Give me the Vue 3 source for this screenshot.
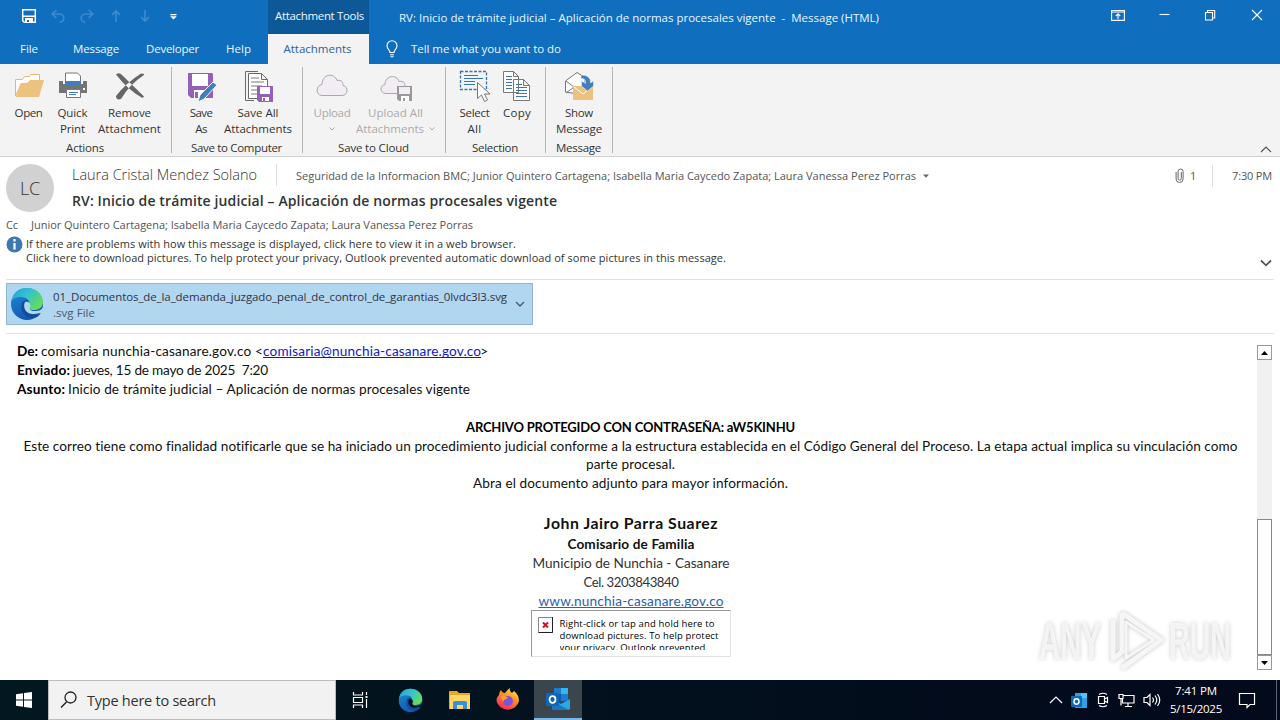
<script setup>
// Tracks a run of text out or in so that it spans the given width in pixels.
const vFit = {
  mounted(el, { value }) {
    const count = [...el.textContent].length
    const natural = el.getBoundingClientRect().width
    if (count > 1) el.style.letterSpacing = `${((value - natural) / (count - 0.5)).toFixed(3)}px`
  },
}
</script>

<template>
  <div class="screen">
    <header class="titlebar">
      <div class="top-row">
        <div class="quick">
          <svg width="16" height="16" viewBox="0 0 16 16"><path d="M1.700 1.700h12.600v12.600H3.200l-1.500-1.500zM2 8.200h12" fill="none" stroke="#fff" stroke-width="1.500" /><path d="M4 10h8v5H4z" fill="#fff" /><path d="M6 12h2v2H6z" fill="#106ebe" /></svg>
          <svg class="dim" width="16" height="16" viewBox="0 0 16 16"><path d="M6.500 2 2 6l4.500 4M2.500 6h7.200a4 4 0 0 1 0 8.200" /></svg>
          <svg class="dim" width="16" height="16" viewBox="0 0 16 16"><path d="M9.500 2 14 6l-4.500 4M13.500 6H6.300a4 4 0 0 0 0 8.200" /></svg>
          <svg class="dim" width="16" height="16" viewBox="0 0 16 16"><path d="M8 14V3M4 7l4-4 4 4" /></svg>
          <svg class="dim" width="16" height="16" viewBox="0 0 16 16"><path d="M8 2v11M4 9l4 4 4-4" /></svg>
          <svg width="16" height="16" viewBox="0 0 16 16"><path d="M4.500 6h6v1.200h-6zM4.200 8.300h6.600L7.500 11.500z" fill="#fff" /></svg>
        </div>
        <div class="tools"><span v-fit="89">Attachment Tools</span></div>
        <div class="window-title"><span v-fit="480">RV: Inicio de trámite judicial – Aplicación de normas procesales vigente&nbsp; -&nbsp; Message (HTML)</span></div>
        <div class="controls">
          <svg width="14" height="12" viewBox="0 0 14 12"><path d="M.6 1.500h12.800v9.900H.6zM.6 3h12.800M7 10V5M4.800 7 7 4.800 9.200 7" /></svg>
          <svg width="12" height="12" viewBox="0 0 12 12"><path d="M1.500 5.500h10" /></svg>
          <svg width="12" height="12" viewBox="0 0 12 12"><path d="M1.500 3.500h7v7.500h-7zM3.500 3.500v-2h7.200v7.500H8.500" /></svg>
          <svg width="12" height="12" viewBox="0 0 12 12"><path d="m1 1 10 10M11 1 1 11" /></svg>
        </div>
      </div>
      <nav class="tabs">
        <span class="tab file"><span v-fit="18">File</span></span>
        <span class="tab msg"><span v-fit="46">Message</span></span>
        <span class="tab dev"><span v-fit="53">Developer</span></span>
        <span class="tab help"><span v-fit="25">Help</span></span>
        <span class="tab active"><span v-fit="68">Attachments</span></span>
        <svg class="bulb" width="12" height="18" viewBox="0 0 12 18"><path d="M4 12.500C4 10 1 9 1 5.700a5 5 0 0 1 10 0C11 9 8 10 8 12.500zM4 14.700h4M4.500 16.700h3" fill="none" stroke="#fff" stroke-width="1.100" /></svg>
        <span v-fit="150">Tell me what you want to do</span>
      </nav>
    </header>

    <section class="ribbon">
      <div class="group actions">
        <div class="buttons">
          <div class="btn">
            <svg width="32" height="32" viewBox="0 0 32 32"><path d="M2.500 26V9.500h7l2-3h5l1-2h9V14H8z" fill="#fff" stroke="#e8b96d" /><path d="M3 27 8 13h6l3-3h14l-5 17z" fill="#ecc27e" /></svg>
            <span v-fit="28">Open</span>
          </div>
          <div class="btn">
            <svg width="32" height="32" viewBox="0 0 32 32"><path d="M8.500 3h12l3 3v8h-15z" fill="#fff" stroke="#777" /><path d="M2 11h4v3h20v-3h4v12H2z" fill="#747474" /><path d="M8 11h16v4H8z" fill="#3f7fbd" /><path d="M9.500 19.500h14v8h-14z" fill="#fff" stroke="#777" /><path d="M12 22.500h9M12 24.500h7" stroke="#3f7fbd" /><path d="M26 18h2v2h-2z" fill="#fff" /></svg>
            <span v-fit="30">Quick</span><span v-fit="25">Print</span>
          </div>
          <div class="btn">
            <svg width="32" height="32" viewBox="0 0 32 32"><path d="M2 4.500Q5 2 8 5L30 26.500l-1.500 1.500Q14 20 2 4.500zM30 4 27 3.500Q12 13 2 26q0 4.500 5 3Q16 14 30 5z" fill="#666" /></svg>
            <span v-fit="43">Remove</span><span v-fit="63">Attachment</span>
          </div>
        </div>
        <div class="caption"><span v-fit="38">Actions</span></div>
      </div>
      <div class="group computer">
        <div class="buttons">
          <div class="btn">
            <svg width="32" height="32" viewBox="0 0 32 32"><path d="M3 3h24l1 1v24H6l-3-3z" fill="#9561b7" /><path d="M7 4h16v12H7zM9 20h11v8H9z" fill="#fff" /><path d="M10 22h3v6h-3z" fill="#9561b7" /><path d="m28 12 4 3-13 14-6 3 2-7z" fill="#3f7fbd" stroke="#f3f3f3" /></svg>
            <span v-fit="23">Save</span><span v-fit="12">As</span>
          </div>
          <div class="btn">
            <svg width="32" height="32" viewBox="0 0 32 32"><path d="M16 1.500H3.500v29H12" fill="none" stroke="#6a6a6a" /><path d="M6.500 3.500h13l6 6v19h-19zM19.500 3.500v6h6" fill="#fff" stroke="#6a6a6a" /><path d="M9 8h8M9 12h13M9 16h11M9 20h7M9 24h7" stroke="#777" /><path d="M15 16h16v16H17l-2-2z" fill="#9561b7" /><path d="M18 17h10v7H18zM20 27h7v4h-7z" fill="#fff" /><path d="M21 28h2v3h-2z" fill="#9561b7" /></svg>
            <span v-fit="41">Save All</span><span v-fit="68">Attachments</span>
          </div>
        </div>
        <div class="caption"><span v-fit="91">Save to Computer</span></div>
      </div>
      <div class="group cloud">
        <div class="buttons">
          <div class="btn off">
            <svg width="32" height="32" viewBox="0 0 32 32"><path d="M6 25.500C-1 25 0 15 6 14.500 6 4 18 2 21 10.500c5-1 6 2 6 5 6 1 5 10-1 10z" fill="#f2edf4" stroke="#aaa6ab" /></svg>
            <span v-fit="37">Upload</span>
            <svg class="menu-caret" width="6" height="4" viewBox="0 0 6 4"><path d="m.5.5 2.500 2.500L5.500.5" fill="none" stroke="#aaa" /></svg>
          </div>
          <div class="btn off">
            <svg width="32" height="32" viewBox="0 0 32 32"><path d="M6 23.500C-1 23 0 15 5 14.500 5 5 17 4 19 11.500c5-1 6 2 6 5l2 7z" fill="#f2edf4" stroke="#aaa6ab" /><path d="M17 16h15v15H19l-2-2z" fill="#999" /><path d="M19 17h11v7H19z" fill="#f2edf4" /><path d="M21 26h8v5h-8z" fill="#fff" /><path d="M23 28h2v3h-2z" fill="#999" /></svg>
            <span v-fit="55">Upload All</span>
            <span class="with-caret"><span v-fit="68">Attachments</span><svg width="6" height="4" viewBox="0 0 6 4"><path d="m.5.5 2.500 2.500L5.500.5" fill="none" stroke="#aaa" /></svg></span>
          </div>
        </div>
        <div class="caption"><span v-fit="71">Save to Cloud</span></div>
      </div>
      <div class="group selection">
        <div class="buttons">
          <div class="btn">
            <svg width="32" height="32" viewBox="0 0 32 32"><path d="M1.500 1.500h26v18h-26z" fill="none" stroke="#3676b5" stroke-width="1.300" stroke-dasharray="3 1.500" /><path d="M5 5.500h14M5 8.500h19M5 11.500h11M5 14.500h11" stroke="#3676b5" /><path d="M18.500 12.500v16l4-3.500 3 6.500 3-1.500-3-6h5.500z" fill="#fff" stroke="#777" /></svg>
            <span v-fit="30">Select</span><span v-fit="14">All</span>
          </div>
          <div class="btn">
            <svg width="32" height="32" viewBox="0 0 32 32"><path d="M2.500 1.500h10l5 5v16h-15zM12.500 1.500v5h5M12.500 9.500h10l6 6v15h-16zM22.500 9.500v6h6" fill="#fff" stroke="#777" /><path d="M5 6.500h6M5 9.500h6M5 12.500h6M5 15.500h6M5 18.500h6M15 14.500h6M15 17.500h11M15 20.500h11M15 23.500h11M15 26.500h11" stroke="#3676b5" /></svg>
            <span v-fit="28">Copy</span>
          </div>
        </div>
        <div class="caption"><span v-fit="46">Selection</span></div>
      </div>
      <div class="group message">
        <div class="buttons">
          <div class="btn">
            <svg width="32" height="32" viewBox="0 0 32 32"><path d="M2.500 11 14 2.500l8 5V25l-19.500-3z" fill="#fff" stroke="#777" /><path d="m3 11 8 6-8 6" fill="none" stroke="#777" /><path d="M10 16h20v14H10z" fill="#ecc27e" /><path d="m11 17 9 7 9-7" fill="none" stroke="#fff" /><path d="M18 5q10 0 9.500 8l3-2v5l-6 5-6-5v-5l4 2.500q1-5-4.500-5z" fill="#3f7fbd" stroke="#f3f3f3" stroke-width=".5" /></svg>
            <span v-fit="28">Show</span><span v-fit="46">Message</span>
          </div>
        </div>
        <div class="caption"><span v-fit="45">Message</span></div>
      </div>
      <svg class="collapse" width="12" height="7" viewBox="0 0 12 7"><path d="m1 6 5-5 5 5" fill="none" stroke="#555" stroke-width="1.100" /></svg>
    </section>

    <section class="envelope">
      <div class="sender-row">
        <div class="avatar"><span v-fit="20">LC</span></div>
        <div class="who">
          <div class="from">
            <span class="name"><span v-fit="185">Laura Cristal Mendez Solano</span></span>
            <span class="recipients"><span v-fit="620">Seguridad de la Informacion BMC; Junior Quintero Cartagena; Isabella Maria Caycedo Zapata; Laura Vanessa Perez Porras</span></span>
            <svg class="more" width="6" height="4" viewBox="0 0 6 4"><path d="M0 .5h6L3 3.700z" fill="#666" /></svg>
            <span class="stamp">
              <svg width="9" height="15" viewBox="0 0 9 15"><path d="M6.300 4v6.500a1.600 1.600 0 0 1-3.200 0V3.500a2.500 2.500 0 0 1 5 0v7.500a3.500 3.500 0 0 1-7 0V4" fill="none" stroke="#666" /></svg>
              <span class="count">1</span>
              <span class="time"><span v-fit="40">7:30 PM</span></span>
            </span>
          </div>
          <div class="subject"><span v-fit="485">RV: Inicio de trámite judicial – Aplicación de normas procesales vigente</span></div>
        </div>
      </div>
      <div class="cc"><span class="cc-label"><span v-fit="12">Cc</span></span><span v-fit="442">Junior Quintero Cartagena; Isabella Maria Caycedo Zapata; Laura Vanessa Perez Porras</span></div>
      <div class="notice">
        <svg class="info" width="17" height="17" viewBox="0 0 17 17"><circle cx="8.500" cy="8.500" r="8" fill="#3e78b3" /><path d="M8.500 3v2.500M8.500 7v6.500" stroke="#fff" stroke-width="2.200" /></svg>
        <div class="notice-text">
          <div><span v-fit="490">If there are problems with how this message is displayed, click here to view it in a web browser.</span></div>
          <div><span v-fit="700">Click here to download pictures. To help protect your privacy, Outlook prevented automatic download of some pictures in this message.</span></div>
        </div>
        <svg class="expand" width="12" height="8" viewBox="0 0 12 8"><path d="m1 1.500 5 4.800 5-4.800" fill="none" stroke="#555" stroke-width="1.800" /></svg>
      </div>
    </section>

    <section class="attachments">
      <div class="file-card">
        <svg width="34" height="34" viewBox="0 0 34 34">
          <defs>
            <linearGradient id="edge-green" x1="0" y1="0" x2="1" y2=".6"><stop offset="0" stop-color="#249fd8" /><stop offset=".5" stop-color="#35c1cd" /><stop offset="1" stop-color="#66dc5c" /></linearGradient>
            <linearGradient id="edge-blue" x1="0" y1="0" x2=".5" y2="1"><stop offset="0" stop-color="#1b8fd8" /><stop offset="1" stop-color="#1555b0" /></linearGradient>
          </defs>
          <g id="edge-mark">
            <circle cx="17" cy="17" r="16" fill="url(#edge-blue)" />
            <path d="M1.500 14C3 5 9 1 17 1c9 0 16 6 16 14 0 6-5 8-9 8-5 0-6-2-5-4 2-5-2-9-8-9-5 0-8 2-9.500 4z" fill="url(#edge-green)" />
            <path d="M12 16c-3 8 3 15 11 15 3 0 6-2 8-5-8 4-15 0-14-7 0-3 1-4 1-6-3 0-5 1-6 3z" fill="#124c9a" />
          </g>
          <path d="M15 15c-3 6 2 13 9 12 3 0 5-1 6-1l4 1v-8c-2 4-5 5-9 5-5 0-6-2-5-4 1-3-1-6-5-5z" fill="#b1d6f0" />
        </svg>
        <div class="file-text"><span v-fit="454">01_Documentos_de_la_demanda_juzgado_penal_de_control_de_garantias_0lvdc3l3.svg</span><span class="kind" v-fit="42">.svg File</span></div>
        <svg width="10" height="7" viewBox="0 0 10 7"><path d="m1 1 4 4 4-4" fill="none" stroke="#456" stroke-width="1.300" /></svg>
      </div>
    </section>

    <main class="reading">
      <article class="mail">
        <p><b v-fit="21">De:</b><span class="g" v-fit="222">comisaria nunchia-casanare.gov.co &lt;</span><a class="mailto" v-fit="218">comisaria@nunchia-casanare.gov.co</a><span class="close">&gt;</span></p>
        <p><b v-fit="53">Enviado:</b><span class="g" v-fit="195">jueves, 15 de mayo de 2025&nbsp; 7:20</span></p>
        <p><b v-fit="48">Asunto:</b><span class="g" v-fit="402">Inicio de trámite judicial – Aplicación de normas procesales vigente</span></p>
        <div class="centered">
          <p class="secret"><b v-fit="329">ARCHIVO PROTEGIDO CON CONTRASEÑA: aW5KINHU</b></p>
          <p><span v-fit="1214">Este correo tiene como finalidad notificarle que se ha iniciado un procedimiento judicial conforme a la estructura establecida en el Código General del Proceso. La etapa actual implica su vinculación como</span></p>
          <p class="tight"><span v-fit="89">parte procesal.</span></p>
          <p><span v-fit="315">Abra el documento adjunto para mayor información.</span></p>
        </div>
        <div class="signature">
          <p class="person"><b v-fit="174">John Jairo Parra Suarez</b></p>
          <p><b v-fit="127">Comisario de Familia</b></p>
          <p><span v-fit="197">Municipio de Nunchia - Casanare</span></p>
          <p class="phone"><span v-fit="95">Cel. 3203843840</span></p>
          <p><a class="site" v-fit="185">www.nunchia-casanare.gov.co</a></p>
          <div class="blocked">
            <svg width="15" height="16" viewBox="0 0 15 16"><path d="M.5.5h14v15H.5z" fill="#fff" stroke="#888" /><path d="M.5 15.500h14V0" fill="none" stroke="#222" /><path d="m5 5.500 5 5M10 5.500l-5 5" stroke="#cf1126" stroke-width="2" /></svg>
            <div class="blocked-text"><span v-fit="155">Right-click or tap and hold here to</span><br><span v-fit="159">download pictures. To help protect</span><br><span v-fit="146">your privacy, Outlook prevented</span></div>
          </div>
        </div>
      </article>
      <div class="scrollbar">
        <div class="arrow"><svg width="7" height="4" viewBox="0 0 7 4"><path d="M0 4 3.500 0 7 4z" /></svg></div>
        <div class="track"><div class="thumb"></div></div>
        <div class="arrow"><svg width="7" height="4" viewBox="0 0 7 4"><path d="M0 0h7L3.500 4z" /></svg></div>
      </div>
      <svg class="watermark" width="208" height="70" viewBox="0 0 208 70">
        <g class="wm-text">
          <text x="8" y="54" textLength="62" lengthAdjust="spacingAndGlyphs">ANY</text>
          <text x="138" y="54" textLength="62" lengthAdjust="spacingAndGlyphs">RUN</text>
        </g>
        <g class="wm-logo">
          <path d="M91 8v39l-9 7V15M91 8l39 27-39 28" stroke-width="5" />
          <path d="M95 17v36l28-18z" stroke-width="3" />
        </g>
      </svg>
    </main>

    <footer class="taskbar">
      <div class="start"><svg width="16" height="16" viewBox="0 0 16 16"><path d="M0 2.300 7 1.300v6.300H0zM8 1.100 16 0v7.600H8zM0 8.500h7v6.300l-7-1zM8 8.500h8V16l-8-1.100z" fill="#fff" /></svg></div>
      <div class="search">
        <svg width="17" height="18" viewBox="0 0 17 18"><path d="m1 16.500 5.500-5.500" stroke="#222" stroke-width="1.400" /><circle cx="10.500" cy="6.500" r="5.500" fill="none" stroke="#222" stroke-width="1.300" /></svg>
        <span v-fit="129">Type here to search</span>
      </div>
      <div class="task"><svg width="18" height="18" viewBox="0 0 18 18"><path d="M2.500 1v3h9V1M2.500 17v-3h9v3M2.500 6.500h9v5h-9zM15.500 1v3M15.500 8v9" fill="none" stroke="#fff" stroke-width="1.200" /><path d="M14.500 5h2v2h-2z" fill="#fff" /></svg></div>
      <div class="task"><svg width="25" height="25" viewBox="0 0 34 34"><use href="#edge-mark" /><path d="M15 15c-3 6 2 13 9 12 3 0 5-1 6-1l4 1v-8c-2 4-5 5-9 5-5 0-6-2-5-4 1-3-1-6-5-5z" fill="#03141c" /></svg></div>
      <div class="task"><svg width="22" height="20" viewBox="0 0 22 20"><path d="M0 2q0-1 1-1h7l2 2h11v16H0z" fill="#e9a927" /><path d="M1 5h20v14H1z" fill="#ffd766" /><path d="M4 19v-6q0-2 2-2h10q2 0 2 2v6h-4v-4H8v4z" fill="#3a91d1" /></svg></div>
      <div class="task">
        <svg width="24" height="24" viewBox="0 0 24 24">
          <defs><linearGradient id="fire" x1=".8" y1="0" x2=".25" y2="1"><stop offset="0" stop-color="#fff04a" /><stop offset=".45" stop-color="#ff8a22" /><stop offset="1" stop-color="#ed2467" /></linearGradient></defs>
          <path d="M3 7q0-3 2-5 1 3 4 3 2-3 5-5-1 3 2 5l2-2q5 4 5 10A11.500 11 0 0 1 .5 13Q.5 9 3 7z" fill="url(#fire)" /><circle cx="12" cy="13" r="5" fill="#8052d8" /><path d="M5 8q5-1 7 2l-3 1.500q-2 .5-1 2-3-1-3-5.500z" fill="#ff9a26" />
        </svg>
      </div>
      <div class="task current">
        <svg width="25" height="24" viewBox="0 0 25 24"><g id="outlook-mark"><path d="M8 1h14v13H8z" fill="#1b7bd0" /><path d="M15 1h7v6h-7z" fill="#35b5ef" /><path d="M8 7h7v7H8z" fill="#0c5dac" /><path d="M6 12l9 5 9-5v9q0 2-2 2H6z" fill="#2ca7e5" /><path d="m6 14 17 9H6z" fill="#1877c4" /><rect y="6" width="13" height="13" rx="1" fill="#0f67b8" /><ellipse cx="6.500" cy="12.500" rx="3" ry="3.300" fill="none" stroke="#fff" stroke-width="1.700" /></g></svg>
      </div>
      <div class="tray">
        <svg class="line" width="14" height="8" viewBox="0 0 14 8"><path d="m1 7 6-6 6 6" /></svg>
        <svg width="17" height="17" viewBox="0 0 17 17"><path d="M4 1h12v15H4z" fill="#2aa3e6" /><path d="M10 1h6v5h-6z" fill="#55c5f5" /><rect y="4" width="11" height="11" rx="1" fill="#0f67b8" /><ellipse cx="5.500" cy="9.500" rx="2.500" ry="2.700" fill="none" stroke="#fff" stroke-width="1.500" /></svg>
        <svg class="line" width="14" height="16" viewBox="0 0 14 16"><path d="M2.500 4.500h6v7h-6zM8.500 7l3-1.500v5l-3-1.500M3 2.500Q7 0 11 2.500M3 13.500q4 2.500 8 0" /></svg>
        <svg class="line" width="17" height="15" viewBox="0 0 17 15"><path d="M5.500 2.500h10.500v7.500H4.500V6M10 10v3M7 13.500h7M1 1.500h4v4H1zM3 5.500v7" /></svg>
        <svg class="line" width="18" height="14" viewBox="0 0 18 14"><path d="M1 4.500h3l3-3v11l-3-3H1zM9.500 4.500q2 2.500 0 5M12 2.500q3.500 4.500 0 9M14.500 1q4.500 6 0 12" /></svg>
      </div>
      <div class="clock"><span v-fit="42">7:41 PM</span><span v-fit="52">5/15/2025</span></div>
      <svg class="action" width="18" height="17" viewBox="0 0 18 17"><path d="M1.500 1.500h15v11H12l-3 3v-3H1.500z" fill="none" stroke="#fff" stroke-width="1.200" /></svg>
      <div class="peek"></div>
    </footer>
  </div>
</template>

<style>
body { margin: 0; overflow: hidden; background: #fff; }
</style>

<style scoped>
.screen { width: 1280px; height: 720px; display: flex; flex-direction: column; background: #fff; font-family: "Open Sans", "Noto Sans", sans-serif; font-size: 11.5px; line-height: 16px; color: #444; overflow: hidden; }
.screen svg { flex: none; display: block; }
span, b, a { white-space: nowrap; }

.titlebar { height: 64px; flex: none; background: #106ebe; color: #eaf6ff; }
.top-row { display: flex; height: 34px; }
.quick { width: 247px; padding: 0 0 2px 21px; display: flex; align-items: center; gap: 13px; }
.dim path { fill: none; stroke: #3f8bcf; stroke-width: 1.600; }
.tools { width: 101px; background: #0d5997; display: flex; align-items: center; justify-content: center; padding: 0 0 2px 2px; box-sizing: border-box; }
.window-title { flex: 1; padding: 10px 0 0 30px; }
.controls { display: grid; grid-template-columns: 46px 46px 46px 47px; justify-items: center; padding-top: 9px; height: 12px; width: 185px; }
.controls path { fill: none; stroke: #fff; stroke-width: 1.100; }
.tabs { display: flex; height: 30px; align-items: center; }
.tab { display: flex; justify-content: center; }
.file { width: 58px; }
.msg { width: 76px; }
.dev { width: 77px; }
.help { width: 55px; padding-right: 2px; }
.active { width: 99px; padding-right: 2px; height: 30px; align-items: center; background: #f3f3f3; color: #2b6499; }
.bulb { margin: 0 13px 0 17px; }

.ribbon { height: 93px; box-sizing: border-box; flex: none; background: #f3f3f3; border-bottom: 1px solid #d2d2d2; display: flex; position: relative; color: #333; }
.group { display: flex; flex-direction: column; box-sizing: border-box; height: 86px; margin-top: 3px; border-right: 1px solid #b5b5b5; padding-top: 3px; }
.buttons { height: 70px; flex: none; display: flex; }
.btn { display: flex; flex-direction: column; align-items: center; }
.btn > svg:first-child { margin-bottom: 3px; }
.caption { text-align: center; padding-right: 1px; }
.actions { width: 172px; }
.actions .buttons { padding-left: 6px; }
.actions .btn:nth-child(1) { width: 45px; }
.actions .btn:nth-child(2) { width: 43px; }
.actions .btn:nth-child(3) { width: 71px; }
.computer { width: 131px; }
.computer .buttons { padding-left: 10px; }
.computer .btn:nth-child(1) { width: 38px; }
.computer .btn:nth-child(2) { width: 76px; }
.cloud { width: 143px; }
.cloud .buttons { padding-left: 7px; }
.cloud .btn:nth-child(1) { width: 44px; }
.cloud .btn:nth-child(2) { width: 83px; }
.off { color: #aaa; }
.menu-caret { margin-top: 6px; }
.with-caret { display: flex; align-items: center; gap: 5px; }
.selection { width: 100px; }
.selection .buttons { padding-left: 9px; }
.selection .btn:nth-child(1) { width: 39px; }
.selection .btn:nth-child(2) { width: 46px; }
.message { width: 67px; }
.message .buttons { justify-content: center; }
.collapse { position: absolute; right: 8px; bottom: 3px; }

.envelope { height: 123px; flex: none; box-sizing: border-box; padding-top: 7px; margin: 0 6px; border-bottom: 1px solid #e1e1e1; font-size: 11px; color: #555; }
.sender-row { display: flex; height: 50px; }
.avatar { width: 48px; height: 48px; border-radius: 50%; background: #d1d1d1; display: flex; align-items: center; justify-content: center; font-size: 18px; font-weight: 300; color: #333; flex: none; }
.who { flex: 1; margin-left: 18px; }
.from { display: flex; align-items: center; height: 22px; }
.name { font-size: 14.5px; font-weight: 300; color: #333; width: 204px; border-right: 1px solid #ddd; line-height: 22px; margin-right: 19px; }
.recipients { margin-right: 7px; padding-top: 1px; }
.more { margin-top: 2px; }
.stamp { margin-left: auto; display: flex; align-items: center; padding-top: 1px; }
.count { margin-left: 6px; width: 22px; }
.time { border-left: 1px solid #ddd; padding-left: 19px; padding-right: 2px; line-height: 22px; }
.subject { font-size: 14px; font-weight: 600; line-height: 20px; margin-top: 5px; color: #333; }
.cc { display: flex; height: 22px; line-height: 22px; }
.cc-label { width: 25px; }
.notice { display: flex; color: #333; align-items: flex-start; margin-top: 1px; }
.info { margin-top: -1px; }
.notice-text { margin-left: 3px; line-height: 14px; }
.expand { margin: 22px 2px 0 auto; }

.attachments { height: 54px; box-sizing: border-box; flex: none; margin: 0 6px; padding-top: 3px; border-bottom: 1px solid #e1e1e1; }
.file-card { width: 527px; height: 42px; box-sizing: border-box; border: 1px solid #92b5cc; background: #b1d6f0; display: flex; align-items: center; padding-left: 3px; }
.file-text { margin: 0 8px 0 9px; width: 454px; display: flex; flex-direction: column; align-items: flex-start; font-size: 11.500px; color: #334; padding-top: 1px; }
.kind { color: #556; }

.reading { flex: 1; display: flex; position: relative; padding: 8px 8px 10px 17px; min-height: 0; }
.mail { width: 1227px; font-family: Lato, "Open Sans", sans-serif; font-size: 13.600px; line-height: 19px; color: #111; }
.mail p { margin: 0; height: 19px; white-space: nowrap; }
.mail b { color: #000; }
.g { margin-left: 3px; }
.mailto { color: #1118c8; text-decoration: underline; text-decoration-skip-ink: none; }
.close { margin-left: -1px; }
.centered { margin-top: 19px; display: flex; flex-direction: column; align-items: center; }
.centered .secret { font-size: 13px; }
.centered .tight { line-height: 17px; height: 18px; }
.signature { margin-top: 21px; display: flex; flex-direction: column; align-items: center; color: #333; padding-left: 1px; }
.signature b { color: #111; }
.signature .person { font-size: 15.800px; height: 21px; line-height: 18px; }
.signature .phone { font-size: 13.2px; }
.site { color: #2a62ae; text-decoration: underline; text-decoration-skip-ink: none; }
.blocked { width: 200px; height: 47px; box-sizing: border-box; border: 1px solid #e2e2e2; border-top-color: #999; border-left-color: #999; display: flex; padding: 6px 0 0 6px; overflow: hidden; margin: -1px 1px 0 0; }
.blocked-text { margin-left: 7px; height: 33px; overflow: hidden; font-family: "Open Sans", sans-serif; font-size: 9.500px; line-height: 12px; padding-top: 1px; box-sizing: border-box; color: #000; white-space: nowrap; }
.scrollbar { margin: 3px 0 0 auto; width: 15px; height: 325px; display: flex; flex-direction: column; }
.arrow { height: 15px; box-sizing: border-box; border: 1px solid #999; background: #fff; display: flex; align-items: center; justify-content: center; }
.track { flex: 1; background: #f1f1f1; display: flex; flex-direction: column; justify-content: flex-end; }
.thumb { height: 136px; box-sizing: border-box; border: 1px solid #888; background: #fff; }
.watermark { position: absolute; left: 1031px; bottom: 5px; filter: drop-shadow(0 0 2px rgba(0, 0, 0, .24)); }
.wm-text { font-family: "Liberation Sans", Arial, sans-serif; font-weight: 700; font-size: 51px; fill: #f8f8f8; opacity: .85; }
.wm-logo { fill: none; stroke: #f6f6f6; stroke-linejoin: round; }

.taskbar { height: 40px; flex: none; background: linear-gradient(90deg, #021820, #020d1c 70%, #020a1b); display: flex; align-items: center; color: #fff; }
.start { width: 48px; display: flex; justify-content: center; }
.search { width: 288px; height: 40px; box-sizing: border-box; border: 1px solid #bbb; background: #f2f2f2; display: flex; align-items: center; padding-left: 11px; gap: 10px; color: #333; font-size: 14.500px; }
.search span { padding-top: 2px; }
.task { width: 48px; height: 40px; display: flex; align-items: center; justify-content: center; box-sizing: border-box; }
.task:nth-child(3) { width: 47px; }
.task:nth-child(4) { width: 55px; }
.task:nth-child(5) { width: 44px; }
.task:nth-child(6) { width: 52px; }
.current { background: #3a464c; border-bottom: 2px solid #76b9ed; }
.tray { margin-left: auto; display: flex; align-items: center; gap: 8px; }
.line path { fill: none; stroke: #fff; stroke-width: 1.200; }
.clock { width: 70px; display: flex; flex-direction: column; align-items: center; line-height: 18px; font-size: 11.500px; }
.action { margin: 0 20px 0 7px; }
.peek { width: 4px; height: 40px; box-sizing: border-box; border-left: 1px solid #5d6370; }
</style>
